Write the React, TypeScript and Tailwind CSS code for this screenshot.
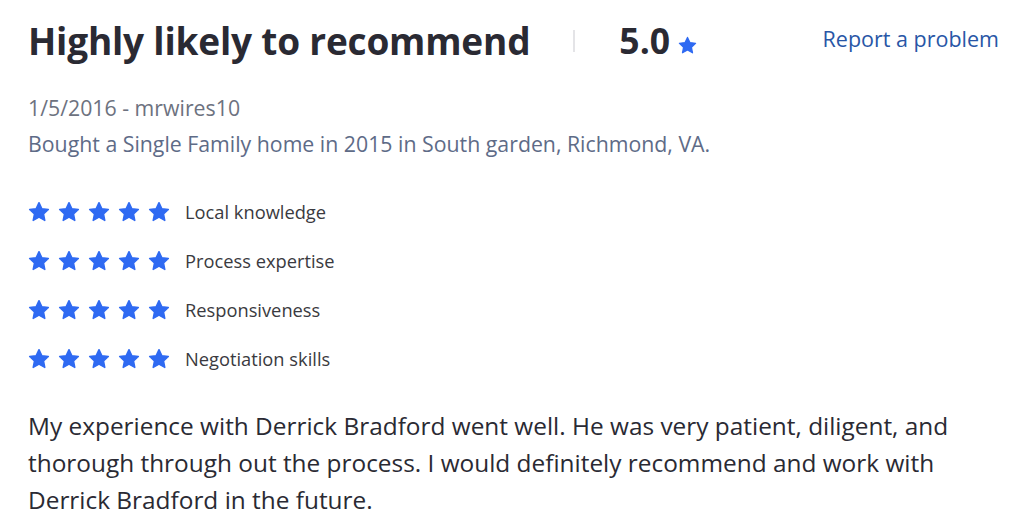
import React from "react";

const Star = ({ size = 22 }: { size?: number }) => (
  <svg width={size} height={size} viewBox="0 0 24 24" aria-hidden="true">
    <path
      fill="#2f6af2"
      stroke="#2f6af2"
      strokeWidth="1.6"
      strokeLinejoin="round"
      d="M12 1.8l3.05 6.55 7.15.85-5.28 4.92 1.4 7.08L12 17.7l-6.32 3.5 1.4-7.08L1.8 9.2l7.15-.85z"
    />
  </svg>
);

const categories = [
  "Local knowledge",
  "Process expertise",
  "Responsiveness",
  "Negotiation skills",
];

export default function App() {
  return (
    <div
      className="w-[1024px] h-[530px] bg-white overflow-hidden pl-[28px] pr-[25px]"
      style={{ fontFamily: '"Open Sans", "Noto Sans", sans-serif' }}
    >
      <div className="flex items-center h-[80px] pt-[2px]">
        <h1 className="text-[37px] font-bold text-[#2a2a33] tracking-[-0.2px]">
          Highly likely to recommend
        </h1>
        <div className="w-[2px] h-[22px] bg-[#e4e4e7] ml-[43px] mr-[44px]" />
        <span className="text-[35.5px] font-bold text-[#2a2a33]">5.0</span>
        <span className="ml-[8px] mt-[8px]">
          <Star size={19} />
        </span>
        <a className="ml-auto text-[21.5px] text-[#2856a6] mb-[3px]">Report a problem</a>
      </div>
      <div className="mt-[9px] text-[21.3px] leading-[37px] text-[#6d7280]">
        1/5/2016 - mrwires10
      </div>
      <div className="text-[21.3px] leading-[36px] text-[#5e6b87]">
        Bought a Single Family home in 2015 in South garden, Richmond, VA.
      </div>
      <div className="mt-[38px] flex flex-col gap-[26px]">
        {categories.map((c) => (
          <div key={c} className="flex items-center h-[23px]">
            <div className="flex gap-[8px]">
              {[0, 1, 2, 3, 4].map((i) => (
                <Star key={i} size={22} />
              ))}
            </div>
            <span className="ml-[15px] text-[18.3px] text-[#3a3a40]">{c}</span>
          </div>
        ))}
      </div>
      <p className="mt-[37px] text-[24.4px] leading-[37px] text-[#2a2a33] w-[935px]">
        My experience with Derrick Bradford went well. He was very patient, diligent, and thorough through
        out the process. I would definitely recommend and work with Derrick Bradford in the future.
      </p>
    </div>
  );
}
